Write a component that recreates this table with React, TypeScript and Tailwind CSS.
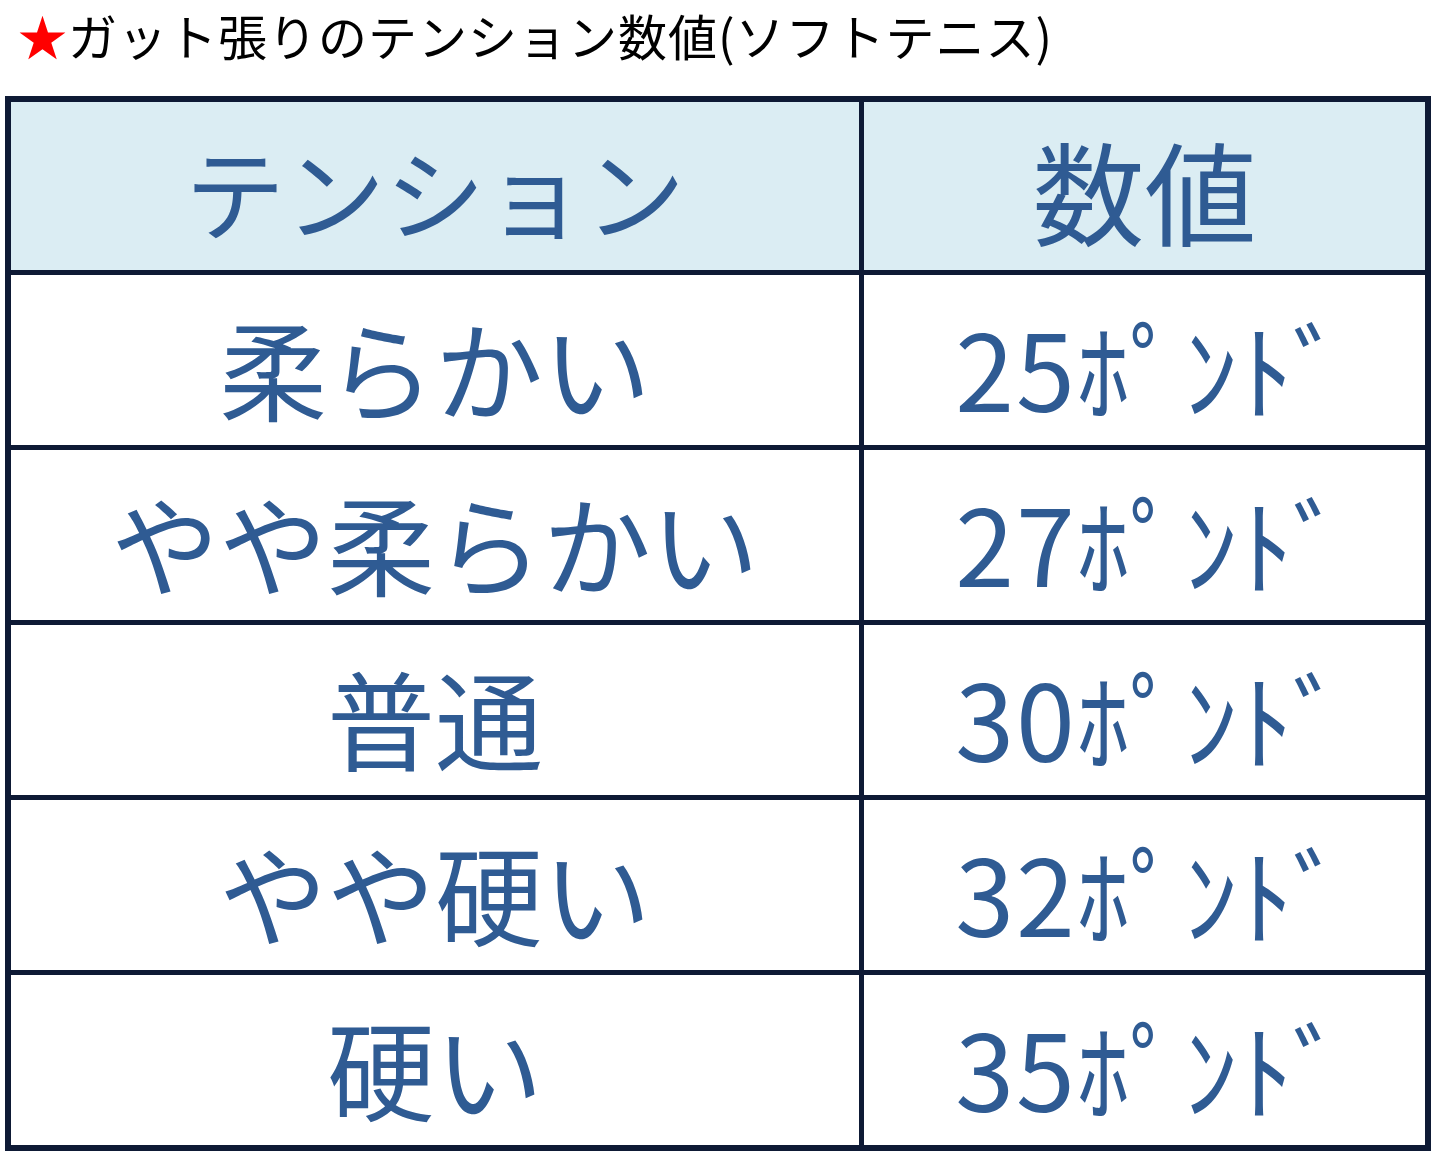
const rows: [string, string][] = [
  ["柔らかい", "25ﾎﾟﾝﾄﾞ"],
  ["やや柔らかい", "27ﾎﾟﾝﾄﾞ"],
  ["普通", "30ﾎﾟﾝﾄﾞ"],
  ["やや硬い", "32ﾎﾟﾝﾄﾞ"],
  ["硬い", "35ﾎﾟﾝﾄﾞ"],
];

const font = { fontFamily: '"Noto Sans CJK JP", "Noto Sans", sans-serif' };

export default function App() {
  return (
    <div className="min-h-[1159px] w-[1436px] bg-white" style={font}>
      <h1 className="h-[96px] whitespace-nowrap pl-[18px] text-[49px] font-normal leading-[70px] tracking-[1px] text-black">
        <span className="text-[#ff0000]">★</span>ガット張りのテンション数値(ソフトテニス)
      </h1>
      <div className="ml-[5px] grid w-[1426px] grid-cols-[848px_1fr] gap-[5px] border-[6px] border-[#0e1a35] bg-[#0e1a35] text-[#2f5b93]">
        <div className="flex h-[168px] items-center justify-center bg-[#dbedf3] pt-[8px] text-[100px] leading-none">
          テンション
        </div>
        <div className="flex h-[168px] items-center justify-center bg-[#dbedf3] pt-[6px] text-[112px] leading-none">
          数値
        </div>
        {rows.map(([label, value]) => (
          <div key={label} className="contents">
            <div className="flex h-[170px] items-center justify-center bg-white pt-[12px] text-[108px] leading-none">
              {label}
            </div>
            <div className="flex h-[170px] items-center justify-center bg-white pl-[14px] pt-[12px] text-[106px] leading-none tracking-[2px]">
              {value}
            </div>
          </div>
        ))}
      </div>
    </div>
  );
}
